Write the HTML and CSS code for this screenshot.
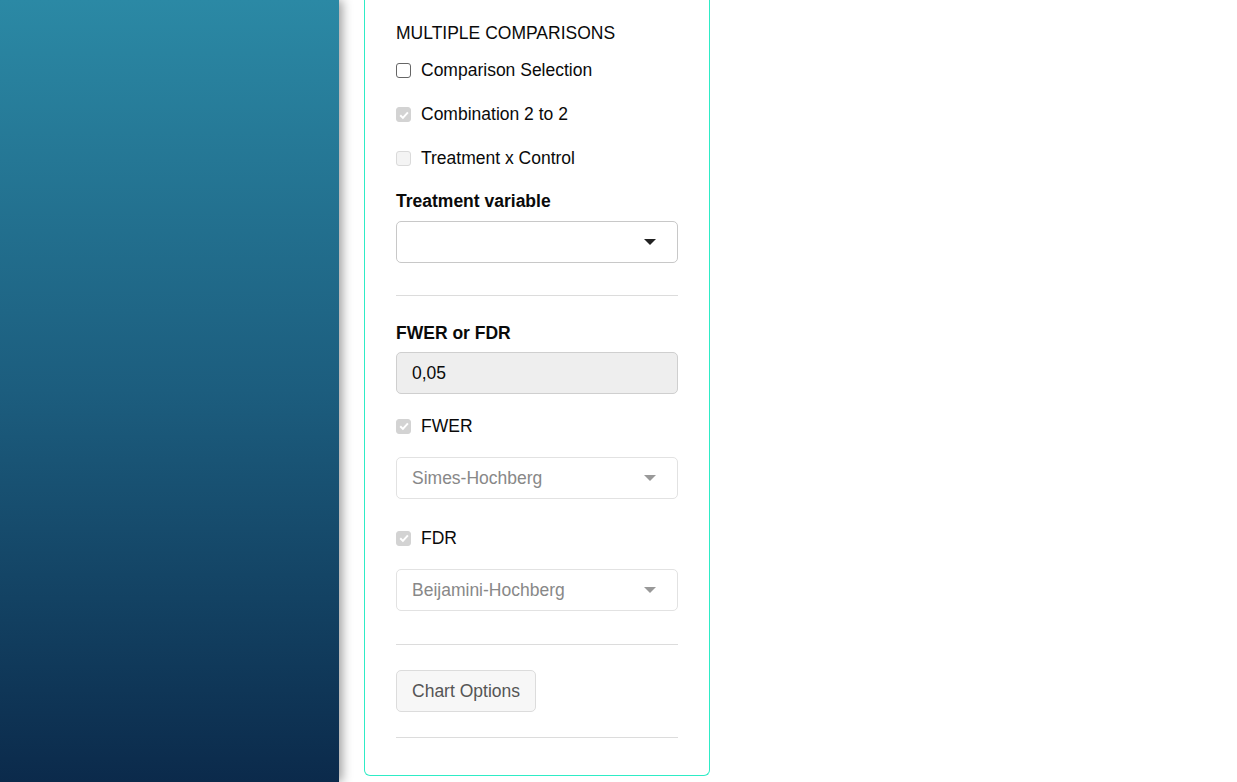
FILE: index.html
```html
<!DOCTYPE html>
<html>
<head>
<meta charset="utf-8">
<link rel="stylesheet" href="styles.css">
</head>
<body>
<div class="layout">
  <aside class="sidebar"></aside>
  <main class="main">
    <section class="panel">
      <div class="title">MULTIPLE COMPARISONS</div>
      <div class="checks">
        <label class="check"><span class="box"></span><span>Comparison Selection</span></label>
        <label class="check"><span class="box box-checked-dis"><svg viewBox="0 0 14 14" width="14" height="14"><path d="M3.2 7.3 L5.9 9.9 L10.9 4.4" fill="none" stroke="#fff" stroke-width="2"/></svg></span><span>Combination 2 to 2</span></label>
        <label class="check"><span class="box box-dis"></span><span>Treatment x Control</span></label>
      </div>
      <div class="field-label first-label">Treatment variable</div>
      <div class="select"><span class="select-text"></span><span class="caret"></span></div>
      <hr class="rule rule-1">
      <div class="field-label second-label">FWER or FDR</div>
      <div class="input">0,05</div>
      <label class="check check-fwer"><span class="box box-checked-dis"><svg viewBox="0 0 14 14" width="14" height="14"><path d="M3.2 7.3 L5.9 9.9 L10.9 4.4" fill="none" stroke="#fff" stroke-width="2"/></svg></span><span>FWER</span></label>
      <div class="select select-dis"><span class="select-text">Simes-Hochberg</span><span class="caret"></span></div>
      <label class="check check-fdr"><span class="box box-checked-dis"><svg viewBox="0 0 14 14" width="14" height="14"><path d="M3.2 7.3 L5.9 9.9 L10.9 4.4" fill="none" stroke="#fff" stroke-width="2"/></svg></span><span>FDR</span></label>
      <div class="select select-dis"><span class="select-text">Beijamini-Hochberg</span><span class="caret"></span></div>
      <hr class="rule rule-2">
      <button class="btn">Chart Options</button>
      <hr class="rule rule-3">
    </section>
  </main>
</div>
</body>
</html>
```

FILE: styles.css
```css
html, body {
  margin: 0;
  padding: 0;
  background: #fff;
  height: 100%;
  overflow: hidden;
}
body {
  font-family: "Liberation Sans", Arial, sans-serif;
  font-size: 17.5px;
  line-height: 25px;
  color: #0a0a0a;
}
.layout {
  display: flex;
  height: 782px;
}
.sidebar {
  width: 339px;
  flex: none;
  background: linear-gradient(to bottom, #2b89a5 0%, #1c5d7e 50%, #0b2a4b 100%);
  box-shadow: 3px 0 10px rgba(0, 0, 0, 0.4);
  position: relative;
  z-index: 1;
}
.main {
  flex: 1;
  padding-left: 25px;
}
.panel {
  width: 282px;
  border: 1px solid #2eecc6;
  border-top: 0;
  border-radius: 0 0 6px 6px;
  padding: 21px 31px 37px 31px;
  display: flex;
  flex-direction: column;
  align-items: flex-start;
}
.title {
  margin-bottom: 12px;
}
.checks {
  display: flex;
  flex-direction: column;
  gap: 19px;
}
.check {
  display: flex;
  align-items: center;
  gap: 10px;
  height: 25px;
}
.box {
  box-sizing: border-box;
  width: 15px;
  height: 15px;
  border: 1.5px solid #666;
  border-radius: 3px;
  background: #fff;
  display: flex;
  align-items: center;
  justify-content: center;
  flex: none;
}
.box svg { flex: none; }
.box-checked-dis {
  border-color: #d3d3d3;
  background: #d3d3d3;
}
.box-dis {
  border-color: #dadada;
  background: #f4f4f4;
}
.field-label {
  font-weight: bold;
  margin-bottom: 7px;
}
.first-label {
  margin-top: 18px;
}
.second-label {
  margin-bottom: 6px;
}
.select {
  box-sizing: border-box;
  width: 282px;
  height: 42px;
  border: 1px solid #c8c8c8;
  border-radius: 5px;
  display: flex;
  align-items: center;
  justify-content: space-between;
  padding: 0 21px 0 15px;
  background: #fff;
}
.select-text { color: #333; }
.caret {
  width: 0;
  height: 0;
  border-left: 6.5px solid transparent;
  border-right: 6.5px solid transparent;
  border-top: 6.5px solid #222;
}
.select-dis {
  border-color: #e2e2e2;
}
.select-dis .select-text { color: #888; }
.select-dis .caret { border-top-color: #999; }
.rule {
  width: 282px;
  margin: 0;
  border: 0;
  border-top: 1px solid #dcdcdc;
}
.rule-1 { margin-top: 32px; margin-bottom: 25px; }
.input {
  box-sizing: border-box;
  width: 282px;
  height: 42px;
  border: 1px solid #cfcfcf;
  border-radius: 5px;
  background: #eee;
  padding: 0 15px;
  display: flex;
  align-items: center;
}
.check-fwer { margin-top: 19.5px; margin-bottom: 18.5px; }
.check-fdr { margin-top: 26.5px; margin-bottom: 18.5px; }
.rule-2 { margin-top: 33px; margin-bottom: 25px; }
.btn {
  font: inherit;
  color: #555;
  background: #f7f7f7;
  border: 1px solid #dcdcdc;
  border-radius: 5px;
  height: 42px;
  width: 140px;
  padding: 0;
}
.rule-3 { margin-top: 25px; }
```
